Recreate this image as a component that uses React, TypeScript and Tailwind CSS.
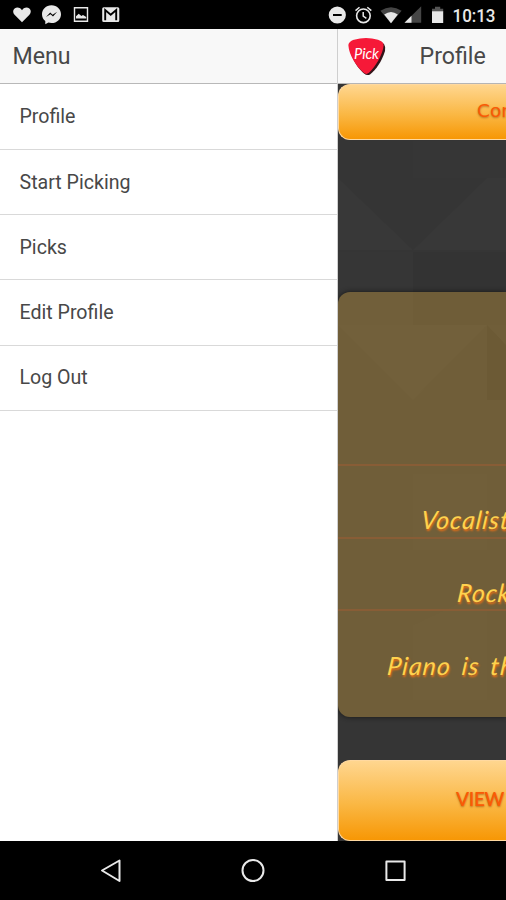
import React from "react";

const menuItems = ["Profile", "Start Picking", "Picks", "Edit Profile", "Log Out"];

function StatusBar() {
  return (
    <div className="flex h-[29px] shrink-0 items-center bg-black text-[#e8e8e8]">
      <svg width="506" height="29" viewBox="0 0 506 29" fill="#e8e8e8" role="img">
        <path d="M22 22.2 L14.8 15 C11.4 11.2 14 7.4 17.2 7.4 C19.6 7.4 21.2 8.8 22 10.2 C22.8 8.8 24.4 7.4 26.8 7.4 C30 7.4 32.6 11.2 29.2 15 Z" />
        <path d="M51.5 5.2 C46 5.2 42 9.3 42 14.2 C42 17.1 43.3 19.5 45.3 21 L45.3 24.3 L48.4 22.6 C49.4 22.9 50.4 23.1 51.5 23.1 C57 23.1 61 19 61 14.2 C61 9.3 57 5.2 51.5 5.2 Z" />
        <path d="M46 17 L50.2 12.5 L52.6 14.7 L57.2 11.7 L53 16.4 L50.5 14.2 Z" fill="#000" />
        <path d="M74.5 7.8 H87.5 V21.2 H74.5 Z" fill="none" stroke="#e8e8e8" strokeWidth="1.4" />
        <path d="M76 18.4 V16.2 L78.7 13.8 L81.4 16 L83 15 L86.2 17 V18.4 Z" />
        <path d="M103.5 7.3 H117.8 Q119.3 7.3 119.3 8.8 V20.5 Q119.3 22 117.8 22 H103.7 Q102.2 22 102.2 20.5 V8.8 Q102.2 7.3 103.7 7.3 Z" />
        <path d="M105.2 20.2 V10 L110.7 14.8 L116.2 10 V20.2" fill="none" stroke="#000" strokeWidth="1.9" />
        <circle cx="337.3" cy="15" r="8.6" />
        <path d="M333 14 H341.7 V16 H333 Z" fill="#000" />
        <circle cx="363.4" cy="15.8" r="6.8" fill="none" stroke="#e8e8e8" strokeWidth="1.6" />
        <path d="M355.5 10.6 L359.5 7.2 M371.3 10.6 L367.3 7.2 M363.2 11.9 V16.2 L366.4 18.3" fill="none" stroke="#e8e8e8" strokeWidth="1.5" />
        <path d="M380.4 10.8 Q391 3.6 401.6 10.8 L391 23.2 Z" fill="#454545" />
        <path d="M384.2 14.6 Q391 9.5 397.8 14.6 L391 23.2 Z" />
        <path d="M404.5 22.8 L421.2 6.3 V22.8 Z" fill="#454545" />
        <path d="M404.5 22.8 L411.5 15.8 V22.8 Z" />
        <path d="M435 6.7 H440.2 V8.7 H443.2 V12 H432 V8.7 H435 Z" fill="#555" />
        <path d="M432 11.3 H443.2 V23 H432 Z" />
        <text x="452.5" y="21.7" fontFamily="Roboto, sans-serif" fontSize="18" fontWeight="500" textLength="43" lengthAdjust="spacingAndGlyphs">10:13</text>
      </svg>
    </div>
  );
}

function PickLogo() {
  return (
    <svg width="40" height="42" viewBox="346 34 40 42" className="ml-2 shrink-0">
      <path d="M351 42 C356 36 378 37 384 43 Q386 46 385 50 C382 60 376 69 370 73.5 Q367 75 364 72.5 C355 65 348 50 351 42 Z" fill="#33151a" />
      <path d="M348.4 44.5 C348.5 41 351.5 39.5 354 38.7 Q366 35.5 378 38.7 C381 39.7 383.8 41.3 383.6 44.5 C383 53 375.5 66 369 71.8 Q366.3 74 363.8 71.8 C356.5 66 349 54 348.4 44.5 Z" fill="#f61938" />
      <text x="354" y="57.5" fill="#fff" fontFamily="Lato, sans-serif" fontStyle="italic" fontSize="15" fontWeight="400" textLength="25" lengthAdjust="spacingAndGlyphs">Pick</text>
    </svg>
  );
}

function Facets() {
  return (
    <svg className="absolute inset-0" width="168" height="757" viewBox="338 84 168 757">
      <rect x="338" y="84" width="168" height="757" fill="#353535" />
      <path d="M338 178 L413 250 H338 Z M413 250 L487 178 H506 V250 Z" fill="#383838" />
      <path d="M413 141 H506 V178 H413 Z M338 252 H413 V325 H338 Z" fill="#363636" />
      <path d="M413 252 H506 V325 H413 Z" fill="#333333" />
      <path d="M338 325 H487 L413 400 Z" fill="#383838" />
      <path d="M487 325 L506 345 V400 H487 Z" fill="#2d2d2d" />
      <path d="M338 474 H413 V550 Z M338 625 L413 550 V625 Z" fill="#343434" />
      <path d="M413 474 H487 V550 H413 Z M413 625 L487 590 V700 H413 Z" fill="#363636" />
      <path d="M450 717 H506 V760 H450 Z" fill="#363636" />
    </svg>
  );
}

const scriptText =
  "origin-bottom-left -skew-x-6 whitespace-nowrap font-[Lato,sans-serif] text-[25px] leading-[30px] font-normal italic text-[#ffd24e] [text-shadow:1px_2px_2px_#e56f17]";

const orangeButton =
  "relative shrink-0 overflow-hidden rounded-l-[12px] border border-r-0 border-[#ffd9a0] bg-[linear-gradient(to_bottom,#ffd68f,#fab743_55%,#f79705)]";

const buttonLabel =
  "whitespace-nowrap leading-[24px] text-[#fa5a05] [text-shadow:0_1px_2px_#b9711f]";

export default function App() {
  return (
    <div className="flex h-[900px] w-[506px] flex-col overflow-hidden bg-black font-[Roboto,sans-serif] text-[#484848]">
      <StatusBar />
      <div className="flex h-[812px] shrink-0">
        <aside className="flex w-[338px] shrink-0 flex-col border-r border-[#cfcfcf] bg-white">
          <header className="flex h-[55px] shrink-0 items-center border-b border-[#b8b8b8] bg-[#f8f8f8] pt-px pl-[12.5px] text-[23.2px]">
            Menu
          </header>
          <nav className="pt-[0.5px]">
            {menuItems.map((item) => (
              <div key={item} className="flex h-[65.25px] items-center border-b border-[#d9d9d9] pt-px pl-[19.5px] text-[19.6px]">
                {item}
              </div>
            ))}
          </nav>
        </aside>
        <main className="flex w-[168px] flex-col overflow-hidden">
          <header className="flex h-[55px] shrink-0 items-center border-b border-[#b5b5b5] bg-[#f8f8f8]">
            <PickLogo />
            <h1 className="ml-[33.5px] pt-px text-[23.2px]">Profile</h1>
          </header>
          <div className="relative h-[757px] overflow-hidden">
            <Facets />
            <div className="relative flex h-full flex-col">
              <div className={`${orangeButton} h-[56px] pt-[14px] pl-[138px]`}>
                <div className={`${buttonLabel} font-['DejaVu_Sans',sans-serif] text-[18.5px]`}>Con</div>
              </div>
              <section className="mt-[152px] flex h-[425px] shrink-0 flex-col rounded-l-[12px] bg-[#bd9440]/44 shadow-[0_0_5px_#171717]">
                <div className="h-[174px] shrink-0 border-b-2 border-[#885d36]" />
                <div className="h-[73px] shrink-0 border-b-2 border-[#885d36] pt-[38px] pl-[82px]">
                  <div className={`${scriptText} tracking-[0.9px]`}>Vocalist</div>
                </div>
                <div className="h-[72px] shrink-0 border-b-2 border-[#885d36] pt-[38px] pl-[118px]">
                  <div className={`${scriptText} tracking-[0.8px]`}>Rock</div>
                </div>
                <div className="pt-[39px] pl-[48px]">
                  <div className={`${scriptText} tracking-[1px] [word-spacing:4px]`}>Piano is th</div>
                </div>
              </section>
              <div className={`${orangeButton} mt-[43px] h-[81px] pt-[26px] pl-[117px]`}>
                <div className={`${buttonLabel} font-[Lato,sans-serif] text-[19px] font-semibold tracking-[-0.3px]`}>VIEW</div>
              </div>
            </div>
          </div>
        </main>
      </div>
      <footer className="flex h-[59px] shrink-0 bg-black">
        <svg width="506" height="59" viewBox="0 841 506 59" fill="none" stroke="#e9e9e9" strokeWidth="2" strokeLinejoin="round">
          <path d="M102 870.5 L119.5 860.5 V881 Z" />
          <circle cx="253" cy="870.5" r="10.5" />
          <path d="M386.4 861.4 H404.6 V880.1 H386.4 Z" />
        </svg>
      </footer>
    </div>
  );
}
